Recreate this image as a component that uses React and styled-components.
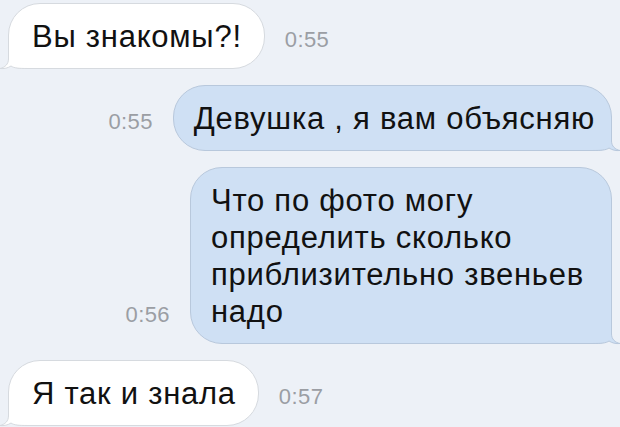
import React from "react";
import styled, { createGlobalStyle } from "styled-components";

const Global = createGlobalStyle`
  html, body { margin: 0; padding: 0; }
  body {
    background: #edf1f7;
    font-family: "Liberation Sans", Arial, sans-serif;
    -webkit-font-smoothing: antialiased;
  }
`;

const Chat = styled.div`
  width: 620px;
  height: 427px;
  box-sizing: border-box;
  padding: 3px 8px 0 8px;
  display: flex;
  flex-direction: column;
  gap: 16px;
  overflow: hidden;
  background: #edf1f7;
`;

const Row = styled.div`
  display: flex;
  align-items: flex-end;
  gap: 20px;
  justify-content: ${(p) => (p.$out ? "flex-end" : "flex-start")};
`;

const Bubble = styled.div`
  position: relative;
  box-sizing: border-box;
  padding-top: 14px;
  padding-bottom: 13px;
  padding-left: ${(p) => (p.$out ? "20px" : "23px")};
  padding-right: ${(p) => (p.$out ? "16px" : "22px")};
  font-size: 31px;
  letter-spacing: 0.75px;
  line-height: 37px;
  color: #111;
  white-space: nowrap;
  background: ${(p) => (p.$out ? "#cfe0f4" : "#ffffff")};
  border: 1px solid ${(p) => (p.$out ? "#b8c8dc" : "#d6dadf")};
  border-radius: 32px;
  ${(p) =>
    p.$out
      ? "border-bottom-right-radius: 14px;"
      : "border-bottom-left-radius: 14px;"}
  ${(p) => (p.$width ? `width: ${p.$width}px;` : "")}
`;

const Time = styled.span`
  font-size: 22px;
  letter-spacing: 0.4px;
  line-height: 20px;
  color: #9b9ea4;
  margin-bottom: 19px;
  white-space: nowrap;
`;

const TailSvg = styled.svg`
  position: absolute;
  bottom: -1px;
  width: 28px;
  height: 24px;
  overflow: visible;
  ${(p) =>
    p.$out
      ? "right: -10px;"
      : "left: -10px; transform: scaleX(-1);"}
`;

function Tail({ out }) {
  const fill = out ? "#cfe0f4" : "#ffffff";
  const stroke = out ? "#b8c8dc" : "#d6dadf";
  return (
    <TailSvg $out={out} viewBox="0 0 28 24">
      <path
        d="M0 0 L18.5 0 L18.5 14 C18.5 19 22 22.5 27 23.5 C23 24 19 23 16 21 C13 23.2 8 23.5 0 23.5 Z"
        fill={fill}
      />
      <path
        d="M18.5 0 L18.5 14 C18.5 19 22 22.5 27 23.5 C23 24 19 23 16 21 C13 23.2 8 23.5 0 23.5"
        fill="none"
        stroke={stroke}
        strokeWidth="1"
      />
    </TailSvg>
  );
}

function Message({ out, time, children, width }) {
  const bubble = (
    <Bubble $out={out} $width={width}>
      {children}
      <Tail out={out} />
    </Bubble>
  );
  return (
    <Row $out={out}>
      {out ? (
        <>
          <Time>{time}</Time>
          {bubble}
        </>
      ) : (
        <>
          {bubble}
          <Time>{time}</Time>
        </>
      )}
    </Row>
  );
}

export default function App() {
  return (
    <>
      <Global />
      <Chat>
        <Message time="0:55">Вы знакомы?!</Message>
        <Message out time="0:55">
          Девушка , я вам объясняю
        </Message>
        <Message out time="0:56" width={422}>
          Что по фото могу
          <br />
          определить сколько
          <br />
          приблизительно звеньев
          <br />
          надо
        </Message>
        <Message time="0:57">Я так и знала</Message>
      </Chat>
    </>
  );
}
